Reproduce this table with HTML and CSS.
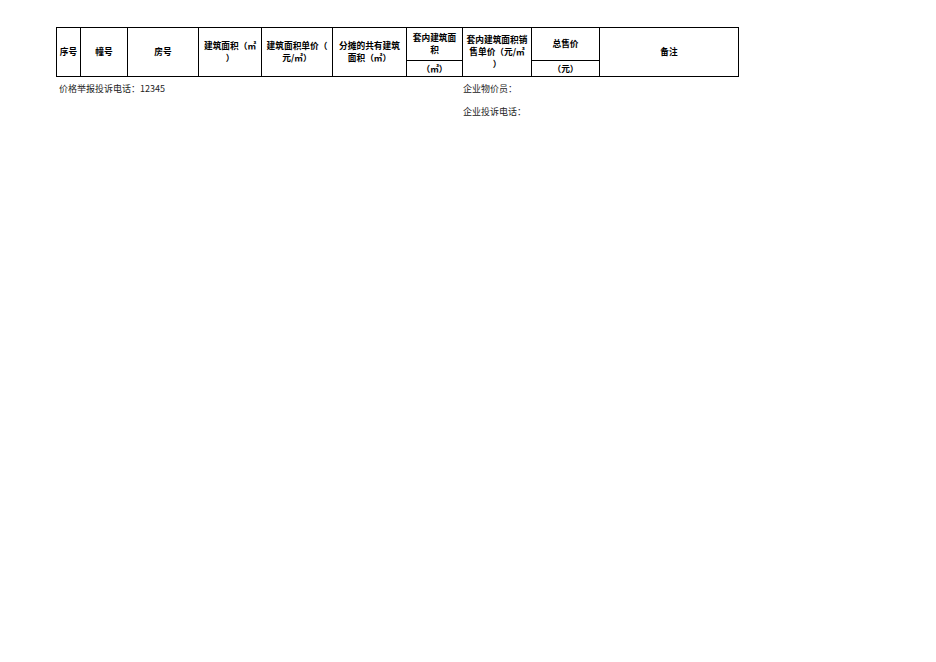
FILE: index.html
```html
<!DOCTYPE html>
<html lang="zh-CN">
<head>
<meta charset="utf-8">
<title>价格表</title>
<link rel="stylesheet" href="styles.css">
</head>
<body>
<div class="page">
  <table class="sheet">
    <colgroup>
      <col class="c1"><col class="c2"><col class="c3"><col class="c4"><col class="c5">
      <col class="c6"><col class="c7"><col class="c8"><col class="c9"><col class="c10">
    </colgroup>
    <tr class="r1">
      <th rowspan="2">序号</th>
      <th rowspan="2">幢号</th>
      <th rowspan="2">房号</th>
      <th rowspan="2">建筑面积（㎡<br>）</th>
      <th rowspan="2">建筑面积单价（<br>元/㎡）</th>
      <th rowspan="2">分摊的共有建筑<br>面积（㎡）</th>
      <th>套内建筑面<br>积</th>
      <th rowspan="2">套内建筑面积销<br>售单价（元/㎡<br>）</th>
      <th>总售价</th>
      <th rowspan="2">备注</th>
    </tr>
    <tr class="r2">
      <th>（㎡）</th>
      <th>（元）</th>
    </tr>
  </table>
  <div class="foot">
    <div class="foot-left">价格举报投诉电话：12345</div>
    <div class="foot-right">
      <div>企业物价员：</div>
      <div>企业投诉电话：</div>
    </div>
  </div>
</div>
</body>
</html>
```

FILE: styles.css
```css
html, body {
  margin: 0;
  padding: 0;
  background: #fff;
}
.page {
  padding: 27px 0 0 56px;
  font-family: "Noto Sans CJK SC", "Noto Sans", sans-serif;
}
.sheet {
  border-collapse: collapse;
  table-layout: fixed;
  width: 683px;
}
.c1 { width: 24px; }
.c2 { width: 47px; }
.c3 { width: 71px; }
.c4 { width: 63px; }
.c5 { width: 71px; }
.c6 { width: 74px; }
.c7 { width: 56px; }
.c8 { width: 69px; }
.c9 { width: 68px; }
.c10 { width: 139px; }
.sheet th {
  border: 1px solid #000;
  padding: 0;
  font-size: 8.7px;
  line-height: 12px;
  font-weight: bold;
  color: #000;
  text-align: center;
  vertical-align: middle;
  white-space: nowrap;
}
.r1 { height: 33px; }
.r2 { height: 16px; }
.foot {
  display: flex;
  font-size: 9px;
  line-height: 23px;
  color: #222;
}
.foot-left {
  width: 404px;
  padding-left: 3px;
}
```
